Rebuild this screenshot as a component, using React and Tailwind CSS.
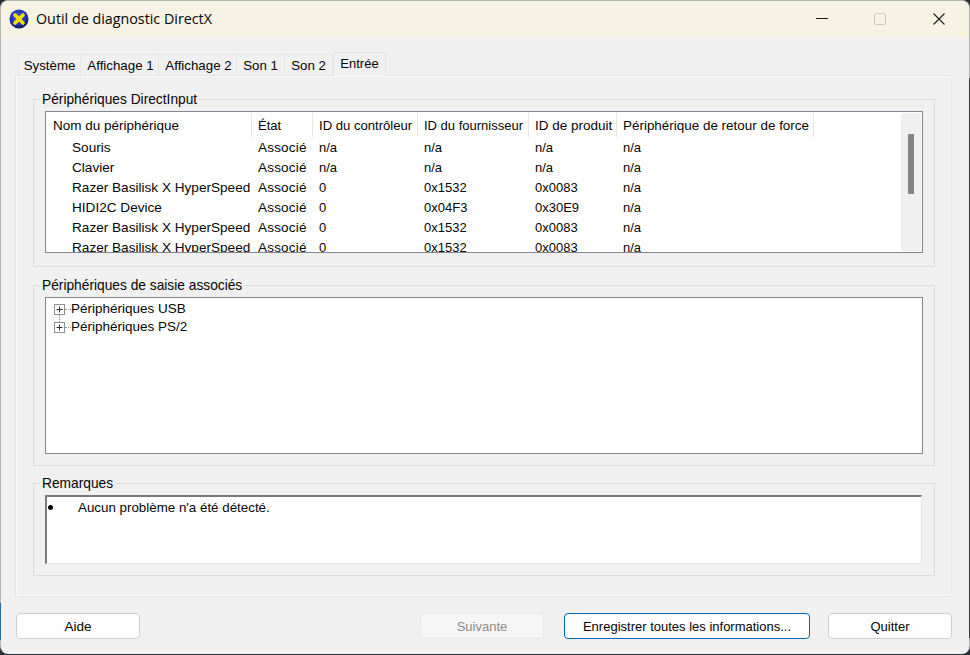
import React from "react";

const columns = [
  { label: "Nom du périphérique", width: "w-[205px]", head: "text-[13.5px]", cell: "text-[13.6px]" },
  { label: "État", width: "w-[61px]", head: "text-[13px]", cell: "text-[13.5px] tracking-[0.2px]" },
  { label: "ID du contrôleur", width: "w-[105px]", head: "text-[13.1px]", cell: "text-[13px]" },
  { label: "ID du fournisseur", width: "w-[111px]", head: "text-[13px]", cell: "text-[13px]" },
  { label: "ID de produit", width: "w-[88px]", head: "text-[13.5px]", cell: "text-[13px]" },
  { label: "Périphérique de retour de force", width: "w-[197px]", head: "text-[13.45px]", cell: "text-[13px]" },
];

const devices = [
  ["Souris", "Associé", "n/a", "n/a", "n/a", "n/a"],
  ["Clavier", "Associé", "n/a", "n/a", "n/a", "n/a"],
  ["Razer Basilisk X HyperSpeed", "Associé", "0", "0x1532", "0x0083", "n/a"],
  ["HIDI2C Device", "Associé", "0", "0x04F3", "0x30E9", "n/a"],
  ["Razer Basilisk X HyperSpeed", "Associé", "0", "0x1532", "0x0083", "n/a"],
  ["Razer Basilisk X HyperSpeed", "Associé", "0", "0x1532", "0x0083", "n/a"],
];

const tabs = [
  { label: "Système", width: "w-[63px]" },
  { label: "Affichage 1", width: "w-[78px] pl-[2px]" },
  { label: "Affichage 2", width: "w-[78px] pl-[2px]" },
  { label: "Son 1", width: "w-[48px]" },
  { label: "Son 2", width: "w-[48px]" },
];

function DirectXIcon() {
  return (
    <svg width="20" height="20" viewBox="0 0 20 20" className="shrink-0">
      <defs>
        <radialGradient id="dx-ball" cx="45%" cy="40%" r="60%">
          <stop offset="0%" stopColor="#4a63e0" />
          <stop offset="70%" stopColor="#2030b0" />
          <stop offset="100%" stopColor="#10154f" />
        </radialGradient>
      </defs>
      <circle cx="10" cy="10" r="9.5" fill="url(#dx-ball)" />
      <path
        d="M6 6 L14 14 M14 6 L6 14"
        stroke="#f7e000"
        strokeWidth="3.6"
        strokeLinecap="round"
      />
    </svg>
  );
}

function Group({ label, className, children }) {
  return (
    <div className={`relative border border-[#dcdcdc] p-[11px] ${className}`}>
      <span className="absolute left-[6px] top-[-9px] bg-[#f0f0f0] px-[2px] text-[13.75px] leading-[18px]">
        {label}
      </span>
      {children}
    </div>
  );
}

function Expander({ line }) {
  return (
    <svg width="11" height="11" viewBox="0 0 11 11" className="shrink-0 overflow-visible">
      <rect x="0.5" y="0.5" width="10" height="10" fill="#fff" stroke="#8f8f8f" />
      <path d="M2.5 5.5h6M5.5 2.5v6" stroke="#303030" />
      {line && <path d="M5.5 11v7" stroke="#8f8f8f" strokeDasharray="1 1" />}
    </svg>
  );
}

function TreeRow({ label, line }) {
  return (
    <div className="flex h-[18px] items-center pl-[8px] text-[13.5px]">
      <Expander line={line} />
      <span className="h-0 w-[6px] border-t border-dotted border-[#9a9a9a]" />
      <span>{label}</span>
    </div>
  );
}

function Button({ children, className = "" }) {
  return (
    <button
      className={`flex h-[26px] items-center justify-center rounded-[4px] border pt-[2px] ${className}`}
    >
      {children}
    </button>
  );
}

export default function App() {
  return (
    <div className="relative h-[655px] w-[970px] overflow-hidden bg-[#2a2f36] font-['Liberation_Sans',Arial,sans-serif] text-[13px] text-[#050505]">
      <div className="flex h-[654px] flex-col overflow-hidden rounded-[8px] border-x border-t border-[#b4b4b4] bg-[#f0f0f0]">
        <header className="flex h-[37px] shrink-0 items-center bg-[#f6f2e4] pb-[1px] pl-[8px]">
          <DirectXIcon />
          <h1 className="ml-[7px] font-['Open_Sans',sans-serif] text-[14.3px] leading-none">
            Outil de diagnostic DirectX
          </h1>
          <div className="ml-auto flex items-center">
            <svg width="14" height="14" viewBox="0 0 14 14" className="mr-[45px]">
              <path d="M2 6.5h12" stroke="#1a1a1a" strokeWidth="1" />
            </svg>
            <svg width="14" height="14" viewBox="0 0 14 14" className="mr-[45px]">
              <rect x="1.5" y="1.5" width="11" height="11" rx="1.5" fill="none" stroke="#c9c8bc" />
            </svg>
            <svg width="14" height="14" viewBox="0 0 14 14" className="mr-[23px]">
              <path d="M1.5 1.5l11 11M12.5 1.5l-11 11" stroke="#1a1a1a" strokeWidth="1.1" />
            </svg>
          </div>
        </header>

        <main className="flex flex-1 flex-col pl-[14px] pt-[14px]">
          <nav className="z-10 flex h-[23px] items-end pl-[3px]">
            {tabs.map((tab) => (
              <div
                key={tab.label}
                className={`flex h-[21px] items-center justify-center border-r border-t border-[#e6e6e6] pt-[2px] text-[13.3px] first:border-l ${tab.width}`}
              >
                {tab.label}
              </div>
            ))}
            <div className="mb-[-1px] flex h-[24px] w-[53px] items-center justify-center border-x border-t border-[#e3e3e3] bg-[#f0f0f0] pb-[2px]">
              Entrée
            </div>
          </nav>

          <section className="flex h-[522px] w-[936px] flex-col border border-[#e3e3e3] pl-[17px] pr-[15px] pt-[23px] shadow-[inset_1px_1px_0_#f9f9f9,inset_-1px_-1px_0_#f9f9f9]">
            <Group label="Périphériques DirectInput" className="h-[168px]">
              <div className="relative h-[142px] w-[878px] overflow-hidden border border-[#85858f] bg-white p-[1px]">
                <div className="flex h-[24px] items-center whitespace-nowrap">
                  {columns.map((col) => (
                    <div
                      key={col.label}
                      className={`flex h-full items-center border-r border-[#e5e5e5] pl-[6px] pt-[2px] ${col.width} ${col.head}`}
                    >
                      {col.label}
                    </div>
                  ))}
                </div>
                {devices.map((row, i) => (
                  <div key={i} className="flex h-[20px] items-center whitespace-nowrap pt-[2px]">
                    {row.map((cell, j) => (
                      <div
                        key={j}
                        className={`${columns[j].width} ${columns[j].cell} ${j === 0 ? "pl-[25px]" : "pl-[6px]"}`}
                      >
                        {cell}
                      </div>
                    ))}
                  </div>
                ))}
                <div className="absolute bottom-[1px] right-[1px] top-[1px] flex w-[20px] justify-center bg-[#f0f0f0] pt-[21px]">
                  <div className="h-[60px] w-[6px] bg-[#858585]" />
                </div>
              </div>
            </Group>

            <Group label="Périphériques de saisie associés" className="mt-[18px] h-[181px]">
              <div className="h-[157px] w-[878px] border border-[#85858f] bg-white pt-[2px]">
                <TreeRow label="Périphériques USB" line />
                <TreeRow label="Périphériques PS/2" />
              </div>
            </Group>

            <Group label="Remarques" className="mt-[17px] h-[93px]">
              <div className="flex h-[69px] w-[877px] border-b border-l-2 border-r border-t-2 border-b-[#e3e3e3] border-l-[#7a7a7a] border-r-[#e3e3e3] border-t-[#7a7a7a] bg-white pt-[1px] text-[13.35px]">
                <span className="ml-[1px] mt-[7px] h-[5px] w-[5px] shrink-0 rounded-full bg-black" />
                <span className="ml-[25px]">Aucun problème n'a été détecté.</span>
              </div>
            </Group>
          </section>

          <footer className="ml-[1px] mt-[16px] flex w-[936px]">
            <Button className="w-[124px] border-[#cfcfcf] bg-[#fdfdfd] text-[13.5px]">Aide</Button>
            <Button className="ml-[280px] w-[124px] border-[#e8e8e8] bg-[#f6f6f6] text-[#8d8d8d]">
              Suivante
            </Button>
            <Button className="ml-[20px] w-[246px] border-[#0067c0] bg-[#fdfdfd]">
              Enregistrer toutes les informations...
            </Button>
            <Button className="ml-[18px] w-[124px] border-[#cfcfcf] bg-[#fdfdfd]">Quitter</Button>
          </footer>
        </main>
      </div>
      {/* bits of the desktop showing past the window edge */}
      <div className="absolute left-0 top-[603px] h-[37px] w-[1px] bg-[#2a6a9a]" />
      <div className="absolute right-0 top-[78px] h-[560px] w-[1px] bg-[#3a3a3a]" />
    </div>
  );
}
